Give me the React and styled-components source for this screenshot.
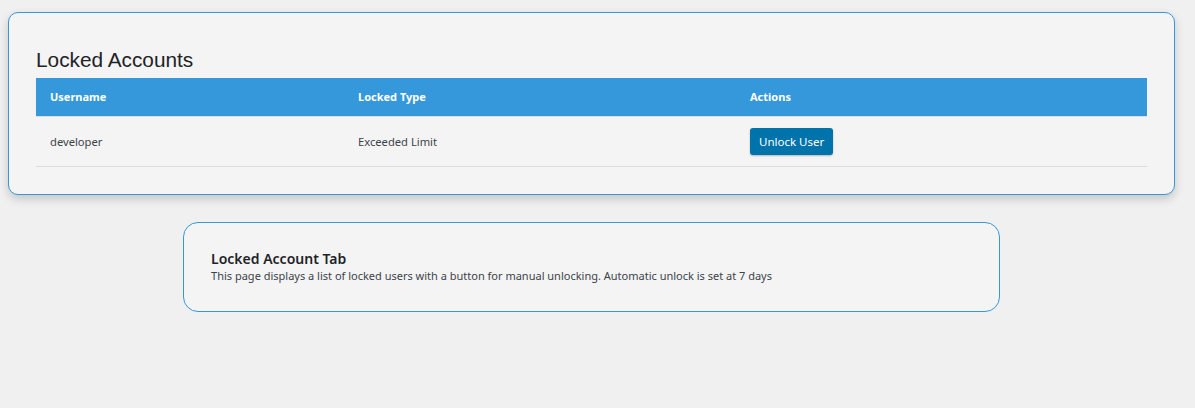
import React from 'react';
import styled, { createGlobalStyle } from 'styled-components';

const GlobalStyle = createGlobalStyle`
  body {
    margin: 0;
    padding: 0;
    background-color: #f0f0f1;
    font-family: "Noto Sans", "Open Sans", sans-serif;
    font-size: 13px;
    color: #3c434a;
  }
`;

const Page = styled.div`
  display: flex;
  flex-direction: column;
  gap: 27px;
  margin: 12px 20px 0 8px;
`;

const Card = styled.div`
  background-color: #f4f4f4;
  border: 1px solid #3498db;
  border-radius: 10px;
  box-shadow: 0 4px 10px rgba(0, 0, 0, 0.18);
  padding: 34px 27px 27px;
`;

const Title = styled.h2`
  margin: 0 0 5px;
  font-family: "Liberation Sans", Arial, sans-serif;
  font-size: 20.8px;
  font-weight: 400;
  line-height: 26px;
  color: #1d2327;
`;

const Table = styled.table`
  width: 100%;
  table-layout: fixed;
  border-collapse: collapse;
  text-align: left;
`;

const HeadCell = styled.th`
  box-sizing: border-box;
  background-color: #3498db;
  color: #fff;
  font-size: 11px;
  font-weight: 700;
  height: 38px;
  padding: 0 14px;
  width: ${({ $w }) => $w || 'auto'};
  border-bottom: 1px solid #dcdcde;
`;

const Cell = styled.td`
  height: 49px;
  padding: 0 14px;
  font-size: 11.2px;
  color: #3c434a;
  border-bottom: 1px solid #dcdcde;
`;

const Button = styled.button`
  height: 27px;
  padding: 0 9px;
  font-family: inherit;
  font-size: 11.5px;
  color: #fff;
  background-color: #0073aa;
  border: none;
  border-radius: 3px;
  box-shadow: 0 1px 2px rgba(0, 0, 0, 0.25);
  cursor: pointer;
`;

const InfoCard = styled.div`
  align-self: center;
  width: 70%;
  box-sizing: border-box;
  height: 90px;
  background-color: #f4f4f4;
  border: 1px solid #3498db;
  border-radius: 15px;
  padding: 27px 27px;
`;

const InfoTitle = styled.h3`
  margin: 0;
  font-size: 14px;
  font-weight: 600;
  line-height: 18px;
  color: #1d2327;
`;

const InfoText = styled.p`
  margin: 0;
  font-size: 11px;
  line-height: 15px;
  color: #3c434a;
`;

const lockedUsers = [{ username: 'developer', type: 'Exceeded Limit' }];

export default function App() {
  return (
    <>
      <GlobalStyle />
      <Page>
        <Card>
          <Title>Locked Accounts</Title>
          <Table>
            <thead>
              <tr>
                <HeadCell $w="308px">Username</HeadCell>
                <HeadCell $w="392px">Locked Type</HeadCell>
                <HeadCell>Actions</HeadCell>
              </tr>
            </thead>
            <tbody>
              {lockedUsers.map((u) => (
                <tr key={u.username}>
                  <Cell>{u.username}</Cell>
                  <Cell>{u.type}</Cell>
                  <Cell>
                    <Button>Unlock User</Button>
                  </Cell>
                </tr>
              ))}
            </tbody>
          </Table>
        </Card>
        <InfoCard>
          <InfoTitle>Locked Account Tab</InfoTitle>
          <InfoText>
            This page displays a list of locked users with a button for manual unlocking. Automatic unlock is set at 7 days
          </InfoText>
        </InfoCard>
      </Page>
    </>
  );
}
